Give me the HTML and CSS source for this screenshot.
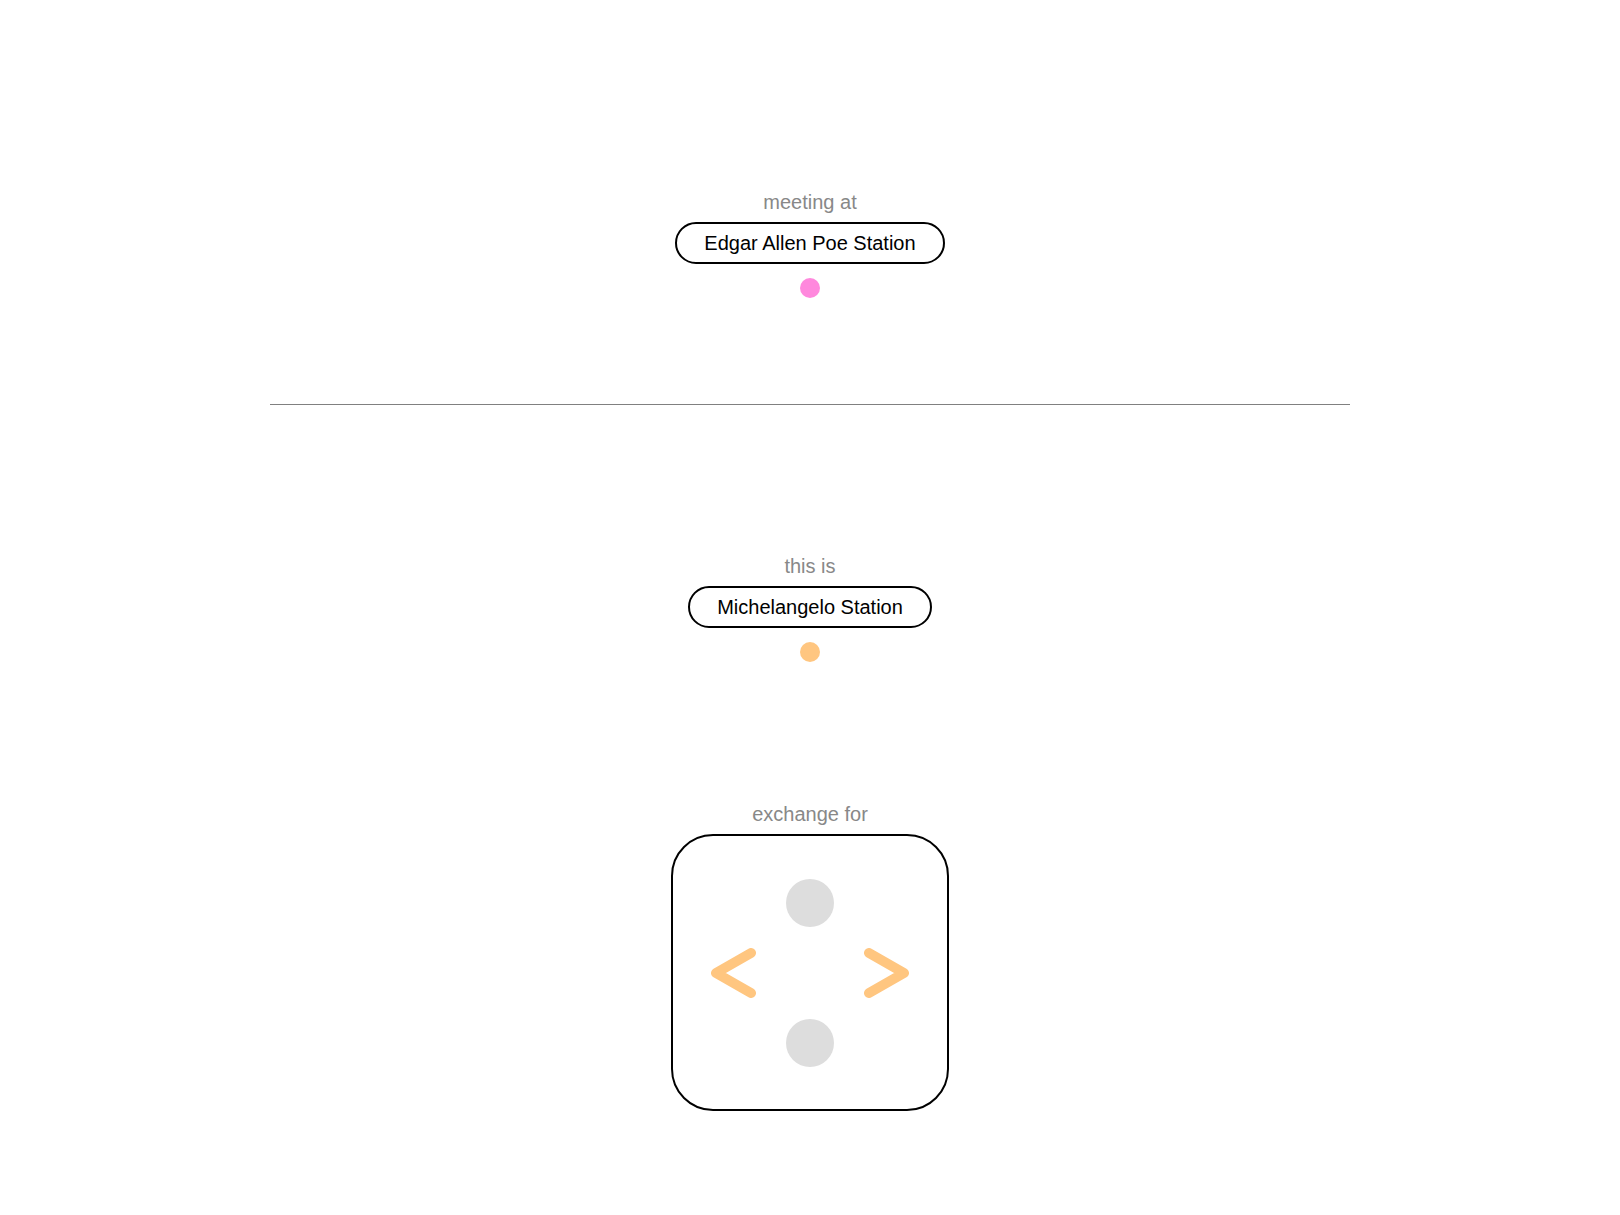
FILE: index.html
```html
<!DOCTYPE html>
<html>
<head>
<meta charset="utf-8">
<link rel="stylesheet" href="styles.css">
</head>
<body>
<section class="sec sec-top">
  <div class="label">meeting at</div>
  <div class="pill">Edgar Allen Poe Station</div>
  <div class="dot dot-pink"></div>
</section>
<hr class="divider">
<section class="sec sec-mid">
  <div class="label">this is</div>
  <div class="pill">Michelangelo Station</div>
  <div class="dot dot-orange"></div>
</section>
<section class="sec sec-ex">
  <div class="label">exchange for</div>
  <div class="box">
    <div class="circle"></div>
    <div class="chev-row">
      <svg class="chev" width="45" height="50" viewBox="0 0 45 50"><path d="M40 5 L5 25 L40 45" fill="none" stroke="#ffc680" stroke-width="10" stroke-linecap="round" stroke-linejoin="round"/></svg>
      <svg class="chev" width="45" height="50" viewBox="0 0 45 50"><path d="M5 5 L40 25 L5 45" fill="none" stroke="#ffc680" stroke-width="10" stroke-linecap="round" stroke-linejoin="round"/></svg>
    </div>
    <div class="circle"></div>
  </div>
</section>
</body>
</html>
```
FILE: styles.css
```css
html, body {
  margin: 0;
  padding: 0;
  background: #ffffff;
}
body {
  font-family: "Liberation Sans", Arial, sans-serif;
  font-size: 20px;
  color: #000;
}
.sec {
  display: flex;
  flex-direction: column;
  align-items: center;
}
.sec-top {
  padding-top: 190px;
  padding-bottom: 106px;
}
.sec-mid {
  padding-top: 149px;
}
.sec-ex {
  padding-top: 140px;
}
.label {
  color: #888888;
  line-height: 24px;
  height: 24px;
}
.pill {
  margin-top: 8px;
  height: 42px;
  box-sizing: border-box;
  border: 2px solid #000;
  border-radius: 21px;
  padding: 0 27px;
  display: flex;
  align-items: center;
  line-height: 24px;
  white-space: nowrap;
}
.dot {
  margin-top: 14px;
  width: 20px;
  height: 20px;
  border-radius: 50%;
}
.dot-pink { background: #ff88dd; }
.dot-orange { background: #ffc680; }
.divider {
  width: 1080px;
  margin: 0 auto;
  border: 0;
  border-top: 1px solid #808080;
  height: 0;
}
.box {
  margin-top: 8px;
  width: 278px;
  height: 277px;
  box-sizing: border-box;
  border: 2px solid #000;
  border-radius: 42px;
  display: flex;
  flex-direction: column;
  align-items: center;
  justify-content: center;
  gap: 21px;
}
.circle {
  width: 48px;
  height: 48px;
  border-radius: 50%;
  background: #dddddd;
}
.chev-row {
  align-self: stretch;
  display: flex;
  justify-content: space-between;
  padding: 0 38px;
  height: 50px;
}
.chev { display: block; }
```
